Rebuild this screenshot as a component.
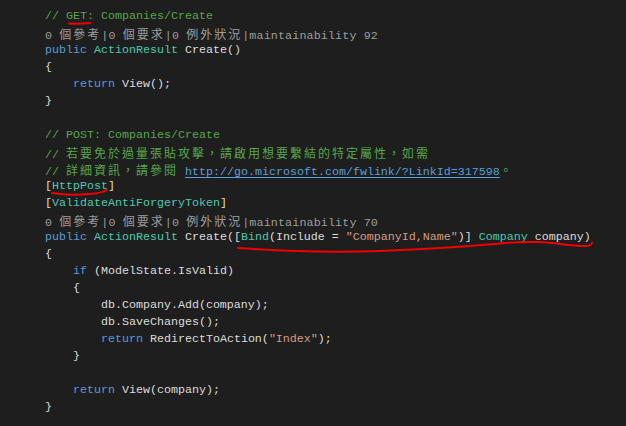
import React from 'react';

// token colours, VS dark theme
const C = {
  cm: 'text-[#57a64a]',
  kw: 'text-[#569cd6]',
  ty: 'text-[#4ec9b0]',
  st: 'text-[#d69d85]',
  tx: 'text-[#dcdcdc]',
  lens: 'text-[#9d9d9d]',
};

const Cj = ({ children }: { children: React.ReactNode }) => (
  <span className="font-['Noto_Sans_CJK_TC',sans-serif] text-[12px] tracking-[2px]">{children}</span>
);

const Line = ({ children }: { children?: React.ReactNode }) => (
  <div className="h-[17px] whitespace-pre">{children}</div>
);

const Lens = ({ score }: { score: string }) => (
  <Line>
    <span className={`${C.lens} tracking-[0.15px]`}>
      0 <Cj>個參考</Cj>|0 <Cj>個要求</Cj>|0 <Cj>例外狀況</Cj>|maintainability {score}
    </span>
  </Line>
);

export default function App() {
  return (
    <div className="relative w-[626px] h-[426px] overflow-hidden bg-[#1e1e1e] pt-[8px] pl-[45px] font-['Liberation_Mono','Noto_Sans_CJK_TC',monospace] text-[11.66px] leading-[17px] text-[#dcdcdc]">
      <Line><span className={C.cm}>// GET: Companies/Create</span></Line>
      <Lens score="92" />
      <Line>
        <span className={C.kw}>public</span> <span className={C.ty}>ActionResult</span> Create()
      </Line>
      <Line>{'{'}</Line>
      <Line>
        {'    '}<span className={C.kw}>return</span> View();
      </Line>
      <Line>{'}'}</Line>
      <Line />
      <Line><span className={C.cm}>// POST: Companies/Create</span></Line>
      <Line>
        <span className={C.cm}>
          // <Cj>若要免於過量張貼攻擊，請啟用想要繫結的特定屬性，如需</Cj>
        </span>
      </Line>
      <Line>
        <span className={C.cm}>
          // <Cj>詳細資訊，請參閱</Cj>{' '}
        </span>
        <span className="text-[#5a9fdb] underline underline-offset-2">http://go.microsoft.com/fwlink/?LinkId=317598</span>
        <span className={C.cm}><Cj>。</Cj></span>
      </Line>
      <Line>
        [<span className={C.ty}>HttpPost</span>]
      </Line>
      <Line>
        [<span className={C.ty}>ValidateAntiForgeryToken</span>]
      </Line>
      <Lens score="70" />
      <Line>
        <span className={C.kw}>public</span> <span className={C.ty}>ActionResult</span> Create([<span className={C.ty}>Bind</span>(Include = <span className={C.st}>"CompanyId,Name"</span>)] <span className={C.ty}>Company</span> company)
      </Line>
      <Line>{'{'}</Line>
      <Line>
        {'    '}<span className={C.kw}>if</span> (ModelState.IsValid)
      </Line>
      <Line>{'    {'}</Line>
      <Line>{'        db.Company.Add(company);'}</Line>
      <Line>{'        db.SaveChanges();'}</Line>
      <Line>
        {'        '}<span className={C.kw}>return</span> RedirectToAction(<span className={C.st}>"Index"</span>);
      </Line>
      <Line>{'    }'}</Line>
      <Line />
      <Line>
        {'    '}<span className={C.kw}>return</span> View(company);
      </Line>
      <Line>{'}'}</Line>

      {/* hand-drawn red marks over the code */}
      <svg className="absolute inset-0 pointer-events-none" width="626" height="426" fill="none" stroke="#f00000" strokeWidth="2" strokeLinecap="round">
        <path d="M69 23.5 Q80 24 90 23" />
        <path d="M52 193 Q70 196 90 194 Q102 193 107 190" />
        <path d="M238 248 C280 251 330 253 380 251 S450 248 500 243.5 S560 246 585 246 Q591 246 592 243" />
      </svg>
    </div>
  );
}
